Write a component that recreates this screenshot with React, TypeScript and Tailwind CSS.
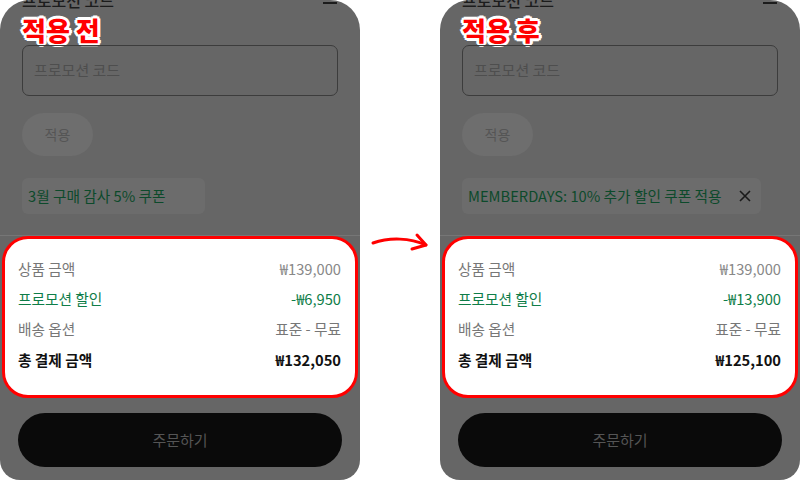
import React from 'react';

interface PanelProps {
    label: string;
    coupon: string;
    removable: boolean;
    discount: string;
    total: string;
}

const outline =
    '[text-shadow:2px_0_#fff,-2px_0_#fff,0_2px_#fff,0_-2px_#fff,2px_2px_#fff,-2px_-2px_#fff,2px_-2px_#fff,-2px_2px_#fff,3px_0_#fff,-3px_0_#fff,0_3px_#fff,0_-3px_#fff]';

function Panel({ label, coupon, removable, discount, total }: PanelProps) {
    return (
        <div className="w-[360px] h-[480px] bg-[#666666] rounded-t-[30px] rounded-b-[20px] overflow-hidden flex flex-col shrink-0">
            {/* sheet header, mostly scrolled out of view */}
            <div className="flex justify-between items-center h-[24px] -mt-[12px] pl-[22px] pr-[23px]">
                <span className="text-[16px] font-medium text-[#1c1c1c] leading-[24px]">프로모션 코드</span>
                <span className="w-[14px] h-[2px] bg-[#1c1c1c] mt-[6px]" />
            </div>

            <div className={`mt-[3px] h-[30px] leading-[30px] px-[22px] text-[26px] font-black text-[#ff0000] ${outline}`}>
                {label}
            </div>

            <div className="mx-[22px] h-[51px] border border-[#3c3c3c] rounded-[7px] flex items-center pl-[11px] text-[15px] text-[#4e4e4e]">
                프로모션 코드
            </div>

            <div className="mt-[17px] mx-[22px] w-[71px] h-[43px] rounded-full bg-[#6e6e6e] flex items-center justify-center text-[14px] text-[#555555]">
                적용
            </div>

            <div className="mt-[22px] mx-[22px] self-start h-[36px] rounded-[6px] bg-[#6c6c6c] flex items-center pl-[6px] pr-[10px] text-[14.7px] text-[#0c4a2b]">
                <span>{coupon}</span>
                <svg
                    className={removable ? 'ml-[17px]' : 'ml-[17px] invisible'}
                    width="12"
                    height="12"
                    viewBox="0 0 12 12"
                    fill="none"
                    stroke="#1a1a1a"
                    strokeWidth="1.6"
                >
                    <path d="M1 1 L11 11 M11 1 L1 11" />
                </svg>
            </div>

            <div className="mt-[21px] h-px bg-[#767676]" />

            <div className="mx-[2px] h-[162px] bg-white border-[3px] border-[#ff0000] rounded-[26px] pt-[19px] pl-[13px] pr-[14px] flex flex-col gap-[8px] text-[14.7px]">
                <div className="flex justify-between leading-[22px]">
                    <span className="text-[#777777]">상품 금액</span>
                    <span className="text-[#888888]">₩139,000</span>
                </div>
                <div className="flex justify-between leading-[22px] text-[#0e7d48]">
                    <span>프로모션 할인</span>
                    <span>{discount}</span>
                </div>
                <div className="flex justify-between leading-[22px]">
                    <span className="text-[#777777]">배송 옵션</span>
                    <span className="text-[#777777]">표준 - 무료</span>
                </div>
                <div className="flex justify-between leading-[22px] mt-[1px] font-bold text-[#111111]">
                    <span>총 결제 금액</span>
                    <span>{total}</span>
                </div>
            </div>

            <div className="mt-[15px] mx-[18px] h-[54px] rounded-full bg-[#0a0a0a] flex items-center justify-center text-[15px] text-[#555555]">
                주문하기
            </div>
        </div>
    );
}

export default function App() {
    return (
        <div className="w-[800px] h-[480px] bg-white flex overflow-hidden font-['Noto_Sans_CJK_KR','Noto_Sans',sans-serif]">
            <Panel
                label="적용 전"
                coupon="3월 구매 감사 5% 쿠폰"
                removable={false}
                discount="-₩6,950"
                total="₩132,050"
            />
            <div className="w-[80px] shrink-0 pt-[228px]">
                <svg width="80" height="30" viewBox="0 0 80 30" fill="none" stroke="#ff0000" strokeWidth="3" strokeLinecap="round" strokeLinejoin="round">
                    <path d="M13 15 C 30 9, 50 10, 66 17" />
                    <path d="M57 7 L66 17 L52 21" />
                </svg>
            </div>
            <Panel
                label="적용 후"
                coupon="MEMBERDAYS: 10% 추가 할인 쿠폰 적용"
                removable={true}
                discount="-₩13,900"
                total="₩125,100"
            />
        </div>
    );
}
